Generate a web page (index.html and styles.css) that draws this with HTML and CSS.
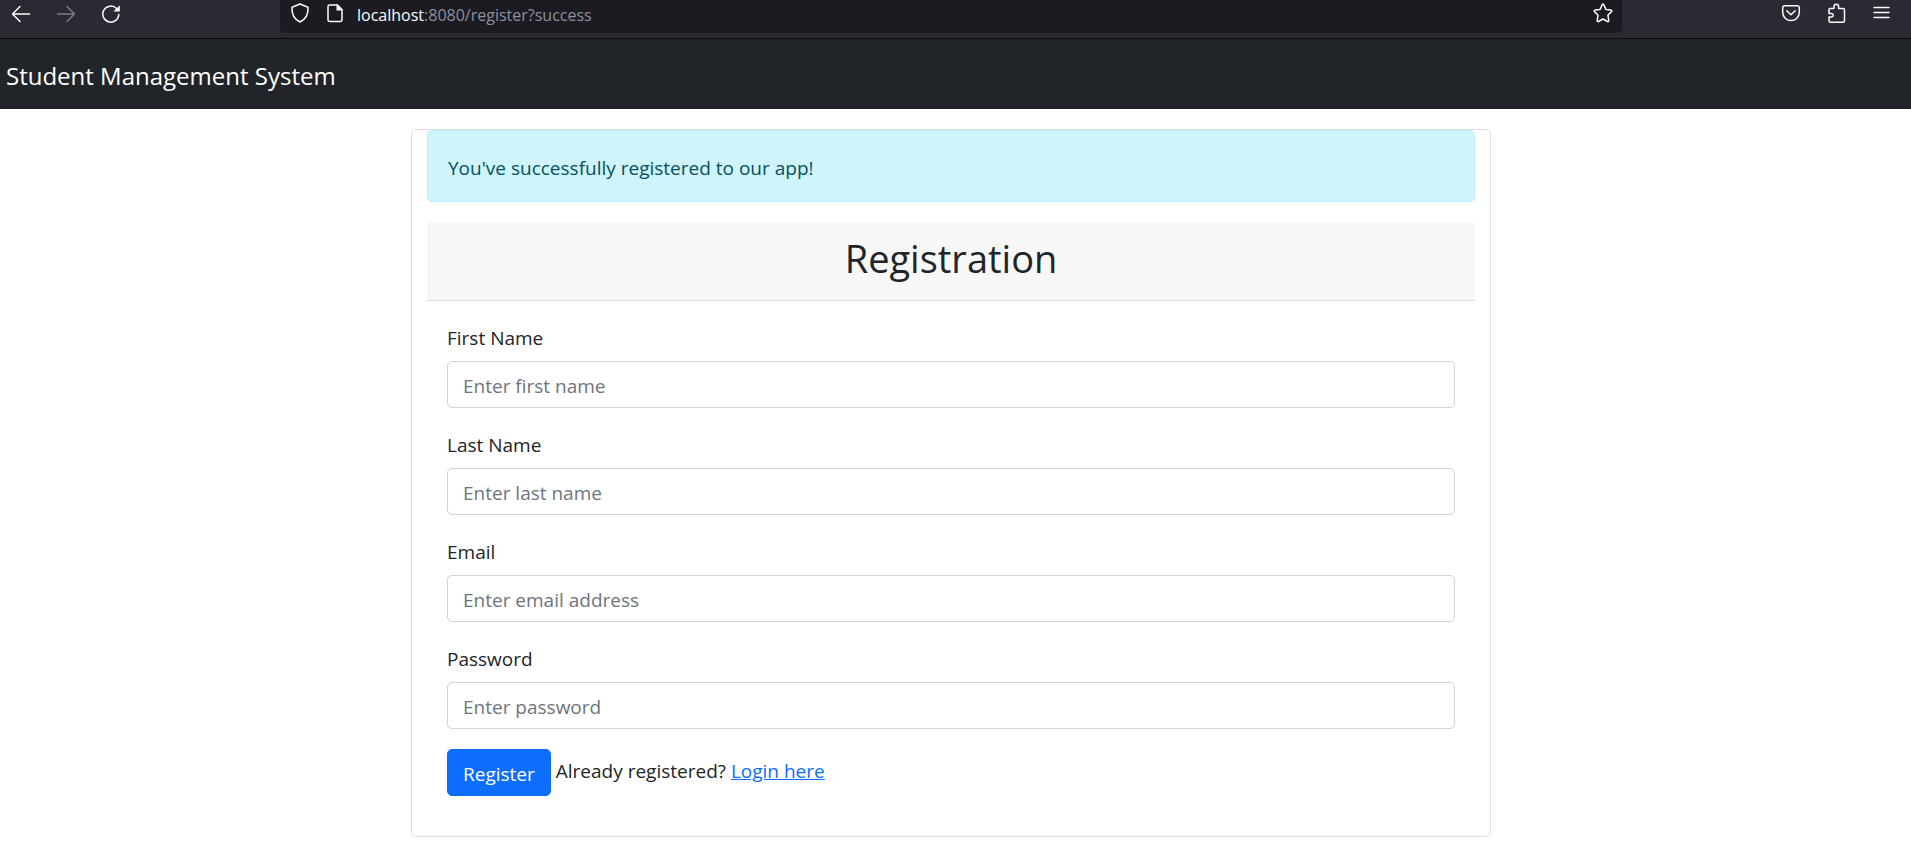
FILE: index.html
```html
<!DOCTYPE html>
<html lang="en">
<head>
  <meta charset="utf-8">
  <title>Registration</title>
  <link rel="stylesheet" href="styles.css">
</head>
<body>
  <div class="toolbar">
    <div class="toolbar-nav">
      <button class="icon-button" type="button" aria-label="Back"><svg class="icon" viewBox="0 0 20 20"><path d="M18.5 11H2M9 3.5 1.5 11 9 18.500"/></svg></button>
      <button class="icon-button icon-button-disabled" type="button" aria-label="Forward" disabled><svg class="icon" viewBox="0 0 20 20"><path d="M1.500 11H18M11 3.500 18.500 11 11 18.500"/></svg></button>
      <button class="icon-button" type="button" aria-label="Reload"><svg class="icon" viewBox="0 0 20 20"><path d="M17.800 11.500A8 8 0 1 1 15.500 5.500"/><path class="icon-fill" d="M18.800 2.200V8.500H12.500Z"/></svg></button>
    </div>
    <div class="address-bar">
      <svg class="icon icon-shield" viewBox="0 0 20 20"><path d="M10 1 18 4.200Q18.800 14.500 10 19Q1.200 14.500 2 4.200Z"/></svg>
      <svg class="icon" viewBox="0 0 20 20"><path d="M4.500 2H12.500L17 6.500V16.500A2 2 0 0 1 15 18.500H5A2 2 0 0 1 3 16.500V3.500A1.500 1.500 0 0 1 4.500 2Z"/><path class="icon-fill" d="M11.500 1.500V7.500H17.500Z"/></svg>
      <span class="address"><span class="address-host">localhost</span>:8080/register?success</span>
      <button class="icon-button" type="button" aria-label="Bookmark"><svg class="icon" viewBox="0 0 20 20"><path d="M9.200 1.700Q10 .400 10.800 1.700L12.900 6.400 18 7.100Q19.500 7.500 18.500 8.600L14.900 12.200 15.800 17.500Q15.800 19 14.500 18.500L10 16 5.500 18.500Q4.200 19 4.200 17.500L5.100 12.200 1.500 8.600Q.500 7.500 2 7.100L7.100 6.400Z"/></svg></button>
    </div>
    <div class="toolbar-actions">
      <button class="icon-button" type="button" aria-label="Pocket"><svg class="icon" viewBox="0 0 20 20"><path d="M3.500 2.800H16.500A2 2 0 0 1 18.300 4.800V9.300A8.300 8.300 0 0 1 1.700 9.300V4.800A2 2 0 0 1 3.500 2.800ZM5.800 7.800 10 11.800 14.200 7.800"/></svg></button>
      <button class="icon-button" type="button" aria-label="Extensions"><svg class="icon" viewBox="0 0 20 20"><path d="M3 10.500V6.500A1 1 0 0 1 4 5.500H8V3.500A2.300 2.300 0 0 1 12.600 3.500V5.500H17A1.500 1.500 0 0 1 18.500 7V17.700A1.500 1.500 0 0 1 17 19.200H4.500A1.500 1.500 0 0 1 3 17.700V14H5.500A1.750 1.750 0 0 0 5.500 10.500Z"/></svg></button>
      <button class="icon-button" type="button" aria-label="Menu"><svg class="icon" viewBox="0 0 20 20"><path d="M3 4.500H18M3 9.500H18M3 14.500H18"/></svg></button>
    </div>
  </div>

  <nav class="navbar">
    <a class="navbar-brand" href="#">Student Management System</a>
  </nav>

  <main class="container">
    <section class="card">
      <div class="alert" role="status">You've successfully registered to our app!</div>
      <div class="card-header">
        <h2 class="card-title">Registration</h2>
      </div>
      <form class="card-body">
        <div class="form-group">
          <label class="form-label" for="firstName">First Name</label>
          <input class="form-control" id="firstName" type="text" placeholder="Enter first name">
        </div>
        <div class="form-group">
          <label class="form-label" for="lastName">Last Name</label>
          <input class="form-control" id="lastName" type="text" placeholder="Enter last name">
        </div>
        <div class="form-group">
          <label class="form-label" for="email">Email</label>
          <input class="form-control" id="email" type="email" placeholder="Enter email address">
        </div>
        <div class="form-group">
          <label class="form-label" for="password">Password</label>
          <input class="form-control" id="password" type="password" placeholder="Enter password">
        </div>
        <div class="form-actions">
          <button class="btn" type="submit">Register</button>
          <span class="form-note">Already registered? <a class="link" href="#">Login here</a></span>
        </div>
      </form>
    </section>
  </main>
</body>
</html>
```

FILE: styles.css
```css
* {
  box-sizing: border-box;
}

body {
  margin: 0;
  background: #fff;
  color: #212529;
  font-family: "Segoe UI", "Open Sans", "Noto Sans", sans-serif;
  font-size: 19px;
  line-height: 30px;
}

.toolbar {
  display: flex;
  height: 39px;
  background: #2b2a33;
  border-bottom: 1px solid #0c0c0d;
  color: #fbfbfe;
}

.toolbar-nav,
.toolbar-actions {
  display: flex;
  gap: 25px;
  padding-top: 3px;
}

.toolbar-nav {
  width: 280px;
  padding-left: 11px;
}

.toolbar-actions {
  width: 289px;
  padding-right: 20px;
  justify-content: flex-end;
}

.address-bar {
  display: flex;
  flex: 1;
  gap: 12px;
  height: 33px;
  padding: 3px 9px 0 10px;
  background: #1c1b22;
  border-radius: 0 0 5px 5px;
}

.address {
  flex: 1;
  color: #8f8f9d;
  font-size: 16px;
  line-height: 24px;
}

.address-host {
  color: #fbfbfe;
}

.icon-button {
  width: 20px;
  height: 20px;
  padding: 0;
  border: 0;
  background: none;
  color: inherit;
}

.icon-button-disabled {
  opacity: 0.4;
}

.icon {
  display: block;
  flex: none;
  width: 20px;
  height: 20px;
  fill: none;
  stroke: currentColor;
  stroke-width: 1.5;
  stroke-linecap: round;
  stroke-linejoin: round;
}

.icon-shield {
  margin-right: 3px;
}

.icon-fill {
  fill: currentColor;
  stroke: none;
}

.navbar {
  padding: 22px 6px 18px;
  background: #212529;
}

.navbar-brand {
  display: block;
  color: #fff;
  font-size: 24px;
  text-decoration: none;
}

.container {
  padding: 20px 9px 15px 0;
}

.card {
  max-width: 1080px;
  margin: 0 auto;
  padding: 0 15px;
  border: 1px solid #dfdfdf;
  border-radius: 5px;
}

.alert {
  margin-bottom: 20px;
  padding: 22px 20px 18px;
  border: 1px solid #b6effb;
  border-radius: 5px;
  background: #cff4fc;
  color: #055160;
}

.card-header {
  padding: 12px 20px 18px;
  border-bottom: 1px solid #d8d8d8;
  background: #f7f7f7;
}

.card-title {
  margin: 0;
  font-size: 38px;
  font-weight: 400;
  line-height: 48px;
  text-align: center;
}

.card-body {
  padding: 20px 20px 40px;
}

.form-group {
  margin-bottom: 20px;
}

.form-label {
  display: block;
  padding: 2px 0 8px;
}

.form-control {
  display: block;
  width: 100%;
  height: 47px;
  padding: 9px 15px 7px;
  border: 1px solid #ced4da;
  border-radius: 5px;
  background: #fff;
  color: #212529;
  font: inherit;
}

.form-control::placeholder {
  color: #6c757d;
  opacity: 1;
}

.form-actions {
  display: flex;
  align-items: center;
  gap: 5px;
}

.form-note {
  padding-bottom: 4px;
}

.btn {
  height: 47px;
  padding: 9px 15px 7px;
  border: 1px solid #0d6efd;
  border-radius: 5px;
  background: #0d6efd;
  color: #fff;
  font: inherit;
}

.link {
  color: #0d6efd;
}
```
